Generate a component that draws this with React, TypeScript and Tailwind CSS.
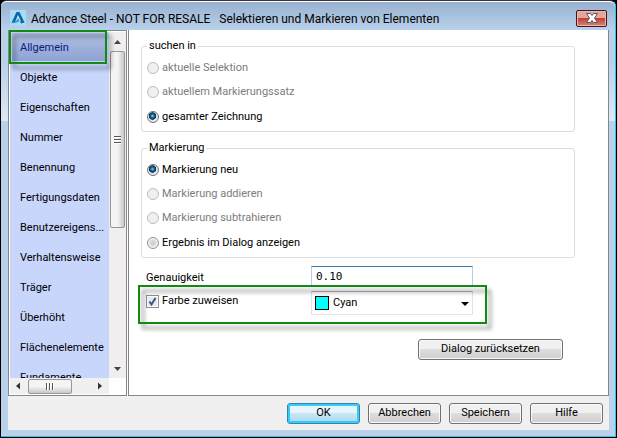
import { useState } from 'react';

const sections = [
    'Allgemein',
    'Objekte',
    'Eigenschaften',
    'Nummer',
    'Benennung',
    'Fertigungsdaten',
    'Benutzereigens...',
    'Verhaltensweise',
    'Träger',
    'Überhöht',
    'Flächenelemente',
    'Fundamente',
];

const searchOptions = [
    { id: 'selection', label: 'aktuelle Selektion', disabled: true },
    { id: 'set', label: 'aktuellem Markierungssatz', disabled: true },
    { id: 'drawing', label: 'gesamter Zeichnung', disabled: false },
];

const markOptions = [
    { id: 'new', label: 'Markierung neu', disabled: false },
    { id: 'add', label: 'Markierung addieren', disabled: true },
    { id: 'subtract', label: 'Markierung subtrahieren', disabled: true },
    { id: 'dialog', label: 'Ergebnis im Dialog anzeigen', disabled: false },
];

const highlight =
    'absolute pointer-events-none border-2 border-[#108a10] drop-shadow-[4px_5px_2px_rgba(0,0,0,0.45)]';

type Option = { id: string; label: string; disabled: boolean };

function RadioGroup({ title, name, options, value, onChange }: {
    title: string;
    name: string;
    options: Option[];
    value: string;
    onChange: (id: string) => void;
}) {
    return (
        <fieldset className="min-w-0 rounded-[3px] border border-[#d5dfe5] px-1 pb-[6px]">
            <legend className="ml-px px-[2px] leading-[14px]">{title}</legend>
            <div className="flex flex-col gap-2 pt-[7px]">
                {options.map((option) => (
                    <label
                        key={option.id}
                        className={`flex h-4 items-center gap-[3px] pl-px last:mt-px ${option.disabled ? 'text-[#7c7c7c]' : 'text-black'}`}
                    >
                        <input
                            type="radio"
                            name={name}
                            checked={value === option.id}
                            disabled={option.disabled}
                            onChange={() => onChange(option.id)}
                            className="h-3 w-3 shrink-0 appearance-none rounded-full border border-[#8e8f8f] bg-[radial-gradient(circle,#d0d4d8_30%,#f8f8f8_70%)] checked:border-[#6d7377] checked:bg-[radial-gradient(circle_at_45%_40%,#7fd0f0_0,#1b6c9c_22%,#0b2f4c_42%,#e4e8ea_50%)] disabled:border-[#bcbcbc] disabled:bg-[#f0f0f0] disabled:bg-none"
                        />
                        {option.label}
                    </label>
                ))}
            </div>
        </fieldset>
    );
}

function DialogButton({ label, primary = false, wide = false }: { label: string; primary?: boolean; wide?: boolean }) {
    return (
        <button
            type="button"
            className={`flex h-[21px] items-center justify-center rounded-[3px] border ${wide ? 'w-[145px]' : 'w-[73px]'} ${
                primary
                    ? 'border-[#3c7fb1] bg-linear-to-b from-[#e8f5fc] from-50% via-[#c8e6f8] via-50% to-[#a8dbf5] inset-ring-2 inset-ring-[#35cdf5]'
                    : 'border-[#707070] bg-linear-to-b from-[#f0f0f0] from-50% via-[#dddddd] via-50% to-[#cfcfcf] inset-ring inset-ring-[#fafafa]'
            }`}
        >
            {label}
        </button>
    );
}

export default function App() {
    const [section, setSection] = useState('Allgemein');
    const [searchIn, setSearchIn] = useState('drawing');
    const [mark, setMark] = useState('new');
    const [precision, setPrecision] = useState('0.10');
    const [assignColor, setAssignColor] = useState(true);
    const [color, setColor] = useState('Cyan');

    return (
        <div className="h-screen bg-black pr-px pb-px pl-px font-['Roboto',sans-serif] text-[11px] text-black">
            <div className="flex h-full flex-col rounded-t-md border-t border-r border-b border-t-[#39343f] border-r-[#24c8e8] border-b-[#24c8e8] bg-[linear-gradient(#b9d1ea_60px,#dce8f5_120px,#b9d1ea_120px)] pr-[6px] pb-[6px] pl-[7px]">
                <header className="-mr-[6px] -ml-[7px] flex h-[29px] shrink-0 items-center gap-[5px] rounded-t-md border-t border-white bg-linear-to-b from-[#97b1d0] to-[#b9d1ea] pt-[6px] pr-[8px] pb-[2px] pl-[9px]">
                    <svg viewBox="0 0 16 16" className="h-4 w-4 shrink-0" aria-hidden="true">
                        <rect width="16" height="16" fill="#a9dbf3" />
                        <path d="M6.500 2 9.500 2 14.500 12.500 11 13.500 8 7.500 5.500 12 1.500 13Z" fill="#0669ad" />
                        <path d="M8 5 11 11.500 8 10.500 5 12Z" fill="#cdebf8" />
                        <path d="M1.500 13C5 12.500 6.500 11 8 8L9.500 11C7.500 12.500 5 13.500 1.500 13Z" fill="#2c9bd6" />
                    </svg>
                    <h1 className="flex-1 truncate pt-[2px] text-[12px] leading-4 whitespace-pre">
                        {'Advance Steel - NOT FOR RESALE   Selektieren und Markieren von Elementen'}
                    </h1>
                    <button
                        type="button"
                        aria-label="Schließen"
                        className="flex h-[17px] w-[31px] items-center justify-center rounded-[2px] border border-[#47151e] bg-linear-to-b from-[#e3a59c] from-45% via-[#bf3a26] via-45% to-[#d68374] inset-ring inset-ring-[#eeb5ac]"
                    >
                        <svg viewBox="0 0 12 10" className="h-[10px] w-3" aria-hidden="true">
                            <path
                                d="M.5.500h4L6 2.500 7.500.500h4L8.500 5l3 4.500h-4L6 7.500 4.500 9.500h-4l3-4.500Z"
                                fill="#fff"
                                stroke="#535666"
                                strokeWidth="1"
                            />
                        </svg>
                    </button>
                </header>

                <div className="flex min-h-0 flex-1 flex-col bg-[#f0f0f0]">
                    <main className="flex min-h-0 flex-1 gap-px bg-white">
                        <nav className="relative flex w-[119px] shrink-0 flex-col border border-[#828790] bg-white pt-px pb-px pl-px">
                            <div className="flex min-h-0 flex-1">
                                <ul className="min-w-0 flex-1 overflow-hidden bg-[#c8d6fc] pt-px">
                                    {sections.map((name) => (
                                        <li key={name} className="h-[30px] px-[2px]">
                                            <button
                                                type="button"
                                                onClick={() => setSection(name)}
                                                className={`block h-[28px] w-full pt-[2px] pl-2 text-left whitespace-nowrap ${
                                                    section === name
                                                        ? 'bg-linear-to-b from-[#b0bfe2] to-[#8fa2d3] text-[#0a1c80]'
                                                        : ''
                                                }`}
                                            >
                                                {name}
                                            </button>
                                        </li>
                                    ))}
                                </ul>
                                <div className="flex w-[17px] flex-col items-center bg-[#f0eeee]">
                                    <svg viewBox="0 0 16 19" className="h-[19px] w-4 shrink-0" aria-hidden="true">
                                        <path d="M4 12h7L7.500 8Z" fill="#444" />
                                    </svg>
                                    <div className="flex h-[177px] w-[15px] shrink-0 flex-col items-center justify-center gap-px rounded-[2px] border border-[#979797] bg-linear-to-r from-[#f4f4f4] from-50% to-[#c8c8c8]">
                                        <span className="h-[2px] w-[7px] border-t border-[#555] bg-white" />
                                        <span className="h-[2px] w-[7px] border-t border-[#555] bg-white" />
                                        <span className="h-[2px] w-[7px] border-t border-[#555] bg-white" />
                                    </div>
                                    <svg viewBox="0 0 16 16" className="mt-auto h-4 w-4 shrink-0" aria-hidden="true">
                                        <path d="M4 5h7L7.500 9Z" fill="#444" />
                                    </svg>
                                </div>
                            </div>
                            <div className="mr-[17px] flex h-4 shrink-0 items-center bg-[#f0f0f0]">
                                <svg viewBox="0 0 18 16" className="h-4 w-[18px]" aria-hidden="true">
                                    <path d="M10 4.500v7L6 8Z" fill="#333" />
                                </svg>
                                <div className="flex h-[15px] w-11 items-center justify-center gap-px rounded-[2px] border border-[#979797] bg-linear-to-b from-[#f4f4f4] from-50% to-[#c8c8c8]">
                                    <span className="h-[7px] w-[2px] border-l border-[#555] bg-white" />
                                    <span className="h-[7px] w-[2px] border-l border-[#555] bg-white" />
                                    <span className="h-[7px] w-[2px] border-l border-[#555] bg-white" />
                                </div>
                                <svg viewBox="0 0 18 16" className="ml-auto h-4 w-[18px]" aria-hidden="true">
                                    <path d="M7 4.500v7L11 8Z" fill="#333" />
                                </svg>
                            </div>
                            <div className={`${highlight} -top-px left-0 h-[34px] w-[98px]`} />
                        </nav>

                        <section className="flex min-w-0 flex-1 flex-col border-r border-b border-l border-[#828790] pt-[9px] pr-[33px] pl-3">
                            <div className="flex flex-col gap-[9px]">
                                <RadioGroup
                                    title="suchen in"
                                    name="searchIn"
                                    options={searchOptions}
                                    value={searchIn}
                                    onChange={setSearchIn}
                                />
                                <RadioGroup
                                    title="Markierung"
                                    name="mark"
                                    options={markOptions}
                                    value={mark}
                                    onChange={setMark}
                                />
                            </div>

                            <div className="relative mt-2 grid grid-cols-[165px_162px] gap-y-[4px] pl-[5px]">
                                <label htmlFor="precision" className="pt-[5px] leading-[14px]">
                                    Genauigkeit
                                </label>
                                <input
                                    id="precision"
                                    value={precision}
                                    onChange={(e) => setPrecision(e.target.value)}
                                    className="h-[21px] border border-[#b5cfe7] border-t-[#3d7bad] px-1 font-['DejaVu_Sans_Mono',monospace]"
                                />
                                <label className="flex h-[21px] items-center gap-[3px]">
                                    <span className="relative flex h-[13px] w-[13px]">
                                        <input
                                            type="checkbox"
                                            checked={assignColor}
                                            onChange={(e) => setAssignColor(e.target.checked)}
                                            className="h-[13px] w-[13px] appearance-none border border-[#8e8f8f] bg-[#e6e9ee] inset-ring inset-ring-white"
                                        />
                                        {assignColor && (
                                            <svg viewBox="0 0 13 13" className="pointer-events-none absolute inset-0" aria-hidden="true">
                                                <path d="M3.500 6.500 5.500 9.500 9.500 3" fill="none" stroke="#42528c" strokeWidth="2" />
                                            </svg>
                                        )}
                                    </span>
                                    Farbe zuweisen
                                </label>
                                <div className="relative">
                                    <select
                                        aria-label="Farbe"
                                        value={color}
                                        onChange={(e) => setColor(e.target.value)}
                                        className="h-6 w-full appearance-none border border-[#e0e3e8] border-t-[#abadb3] bg-white pl-[21px]"
                                    >
                                        <option>Cyan</option>
                                        <option>Rot</option>
                                        <option>Gelb</option>
                                    </select>
                                    <span className="pointer-events-none absolute top-[5px] left-1 h-[14px] w-[14px] border border-black bg-[#00ffff]" />
                                    <svg viewBox="0 0 8 4" className="pointer-events-none absolute top-[11px] right-1 h-1 w-2" aria-hidden="true">
                                        <path d="M0 0h8L4 4Z" fill="#000" />
                                    </svg>
                                </div>
                                <div className={`${highlight} top-[19px] -left-[3px] h-[39px] w-[349px]`} />
                            </div>

                            <div className="mt-[24px] mr-3 flex justify-end">
                                <DialogButton label="Dialog zurücksetzen" wide />
                            </div>
                        </section>
                    </main>

                    <footer className="flex h-[34px] shrink-0 items-center justify-end gap-2 pr-[6px]">
                        <DialogButton label="OK" primary />
                        <DialogButton label="Abbrechen" />
                        <DialogButton label="Speichern" />
                        <DialogButton label="Hilfe" />
                    </footer>
                </div>
            </div>
        </div>
    );
}
